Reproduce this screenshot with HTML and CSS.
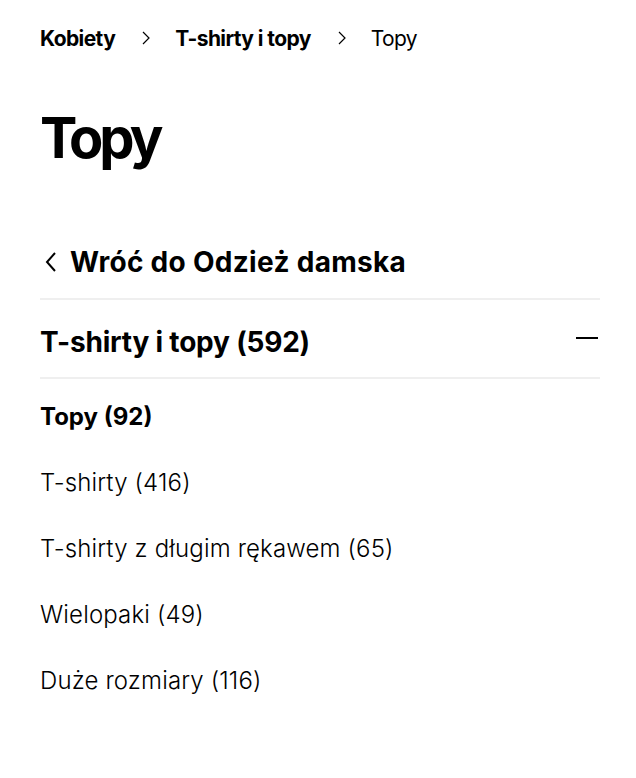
FILE: index.html
```html
<!DOCTYPE html>
<html lang="pl">
<head>
<meta charset="utf-8">
<link rel="stylesheet" href="styles.css">
</head>
<body>
<div class="page">
  <nav class="crumbs">
    <a class="crumb bold" href="#">Kobiety</a>
    <svg class="sep" viewBox="0 0 12 16" width="12" height="16"><path d="M3 2 L9 8 L3 14" fill="none" stroke="#000" stroke-width="1.2"/></svg>
    <a class="crumb bold" href="#">T-shirty i topy</a>
    <svg class="sep" viewBox="0 0 12 16" width="12" height="16"><path d="M3 2 L9 8 L3 14" fill="none" stroke="#000" stroke-width="1.2"/></svg>
    <span class="crumb">Topy</span>
  </nav>
  <h1 class="title">Topy</h1>
  <a class="back" href="#">
    <svg class="back-icon" viewBox="0 0 14 20" width="14" height="20"><path d="M11 1 L3 10 L11 19" fill="none" stroke="#000" stroke-width="2"/></svg>
    <span>Wróć do Odzież damska</span>
  </a>
  <div class="group">
    <span class="group-name">T-shirty i topy (592)</span>
    <span class="minus"></span>
  </div>
  <ul class="list">
    <li class="item active">Topy (92)</li>
    <li class="item">T-shirty (416)</li>
    <li class="item">T-shirty z długim rękawem (65)</li>
    <li class="item">Wielopaki (49)</li>
    <li class="item">Duże rozmiary (116)</li>
  </ul>
</div>
</body>
</html>
```
FILE: styles.css
```css
* { box-sizing: border-box; }
body { margin: 0; background: #fff; color: #000; font-family: Inter, "Noto Sans", sans-serif; }
a { color: inherit; text-decoration: none; }
.page { padding: 0 36px 0 40px; }
.crumbs { display: flex; align-items: center; height: 76px; font-size: 21px; letter-spacing: -0.6px; }
.crumb { line-height: 1; }
.bold { font-weight: 700; }
.sep { margin: 0 23px 0 25px; }
.title { margin: 27px 0 0; font-size: 56px; line-height: 70px; font-weight: 700; letter-spacing: -4px; }
.back { display: flex; align-items: center; gap: 12px; margin-top: 69px; height: 40px; font-size: 28px; font-weight: 700; letter-spacing: 0.3px; }
.back-icon { margin-left: 4px; }
.group { display: flex; align-items: center; justify-content: space-between; margin-top: 16px; height: 81px; padding-top: 6px; border-top: 2px solid #efefef; border-bottom: 2px solid #efefef; font-size: 28px; font-weight: 700; letter-spacing: -0.2px; }
.minus { width: 22px; height: 2px; background: #000; margin-right: 2px; margin-top: -8px; }
.list { list-style: none; margin: 0; padding: 5px 0 0; }
.item { height: 66px; line-height: 66px; font-size: 24px; letter-spacing: 0.15px; font-weight: 300; }
.item.active { font-weight: 700; letter-spacing: 0; }
```
